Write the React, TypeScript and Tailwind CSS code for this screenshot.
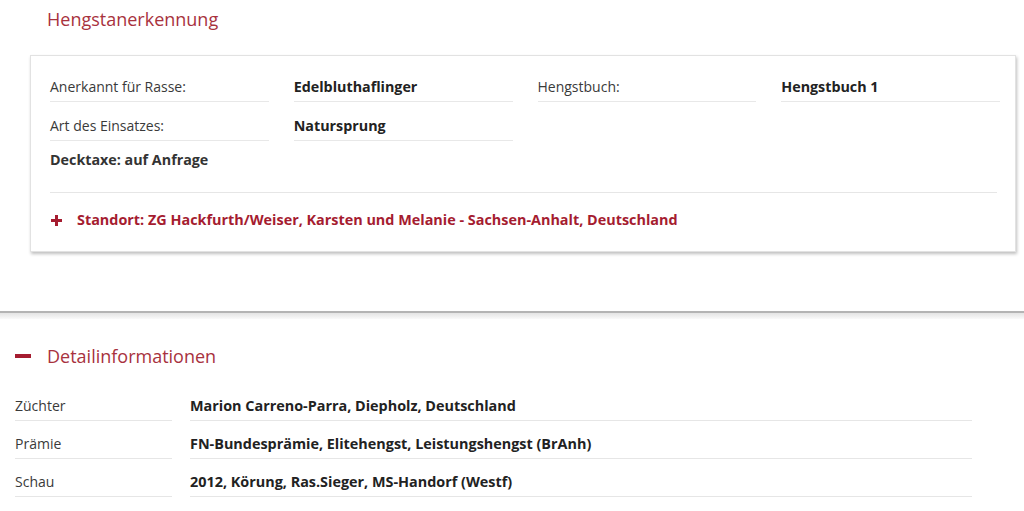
export default function App() {
  const details = [
    { label: "Züchter", value: "Marion Carreno-Parra, Diepholz, Deutschland" },
    { label: "Prämie", value: "FN-Bundesprämie, Elitehengst, Leistungshengst (BrAnh)" },
    { label: "Schau", value: "2012, Körung, Ras.Sieger, MS-Handorf (Westf)" },
  ];

  return (
    <div className="min-h-screen bg-white text-[14px] text-[#3a3a3a]" style={{ fontFamily: '"Open Sans", "Noto Sans", sans-serif' }}>
      {/* Hengstanerkennung */}
      <section className="pb-[59px]">
        <h2 className="pl-[47px] pt-[6px] text-[18px] leading-[26px] text-[#a8323e]">Hengstanerkennung</h2>
        <div className="mt-[23px] ml-[30px] mr-[8px] border border-[#e2e2e2] bg-white pl-[19px] pr-[15px] pt-[17px] shadow-[1px_2px_3px_rgba(0,0,0,0.25)]">
          <div className="grid grid-cols-4 gap-x-[25px]">
            <div className="border-b border-[#e8e8e8] py-[4px] leading-[20px]">Anerkannt für Rasse:</div>
            <div className="border-b border-[#e8e8e8] py-[4px] text-[14.3px] font-bold leading-[20px] text-[#222]">Edelbluthaflinger</div>
            <div className="border-b border-[#e8e8e8] py-[4px] leading-[20px]">Hengstbuch:</div>
            <div className="border-b border-[#e8e8e8] py-[4px] text-[14.3px] font-bold leading-[20px] text-[#222]">Hengstbuch 1</div>
            <div className="mt-[10px] border-b border-[#e8e8e8] py-[4px] leading-[20px]">Art des Einsatzes:</div>
            <div className="mt-[10px] border-b border-[#e8e8e8] py-[4px] text-[14.3px] font-bold leading-[20px] text-[#222]">Natursprung</div>
          </div>
          <div className="pt-[9px] pb-[22px] text-[14.3px] font-bold leading-[20px] text-[#333]">Decktaxe: auf Anfrage</div>
          <div className="mr-[3px] border-t border-[#e6e6e6]" />
          <div className="flex items-center pt-[17px] pb-[21px] text-[14.4px] font-bold leading-[20px] text-[#a51c30]">
            <span className="relative ml-[1px] mr-[15px] block h-[11px] w-[11px]">
              <span className="absolute left-0 top-[4px] h-[3px] w-[11px] bg-[#a51c30]" />
              <span className="absolute left-[4px] top-0 h-[11px] w-[3px] bg-[#a51c30]" />
            </span>
            Standort: ZG Hackfurth/Weiser, Karsten und Melanie - Sachsen-Anhalt, Deutschland
          </div>
        </div>
      </section>

      {/* Trenner */}
      <div className="h-[2px] bg-[#b4b4b4]" />
      <div className="h-[6px] bg-gradient-to-b from-[#e4e4e4] to-[#fafafa]" />

      {/* Detailinformationen */}
      <section className="pl-[15px] pt-[24px]">
        <h2 className="flex items-center text-[18px] leading-[26px] text-[#a8323e]">
          <span className="mr-[16px] block h-[4px] w-[16px] bg-[#a51c30]" />
          Detailinformationen
        </h2>
        <div className="mt-[18px] w-[957px]">
          {details.map((d) => (
            <div key={d.label} className="mb-[4px] flex gap-x-[18px]">
              <div className="w-[157px] border-b border-[#e6e6e6] pt-[9px] pb-[4px] leading-[20px]">{d.label}</div>
              <div className="flex-1 border-b border-[#e6e6e6] pt-[9px] pb-[4px] text-[14.4px] font-bold leading-[20px] text-[#222]">{d.value}</div>
            </div>
          ))}
        </div>
      </section>
    </div>
  );
}
